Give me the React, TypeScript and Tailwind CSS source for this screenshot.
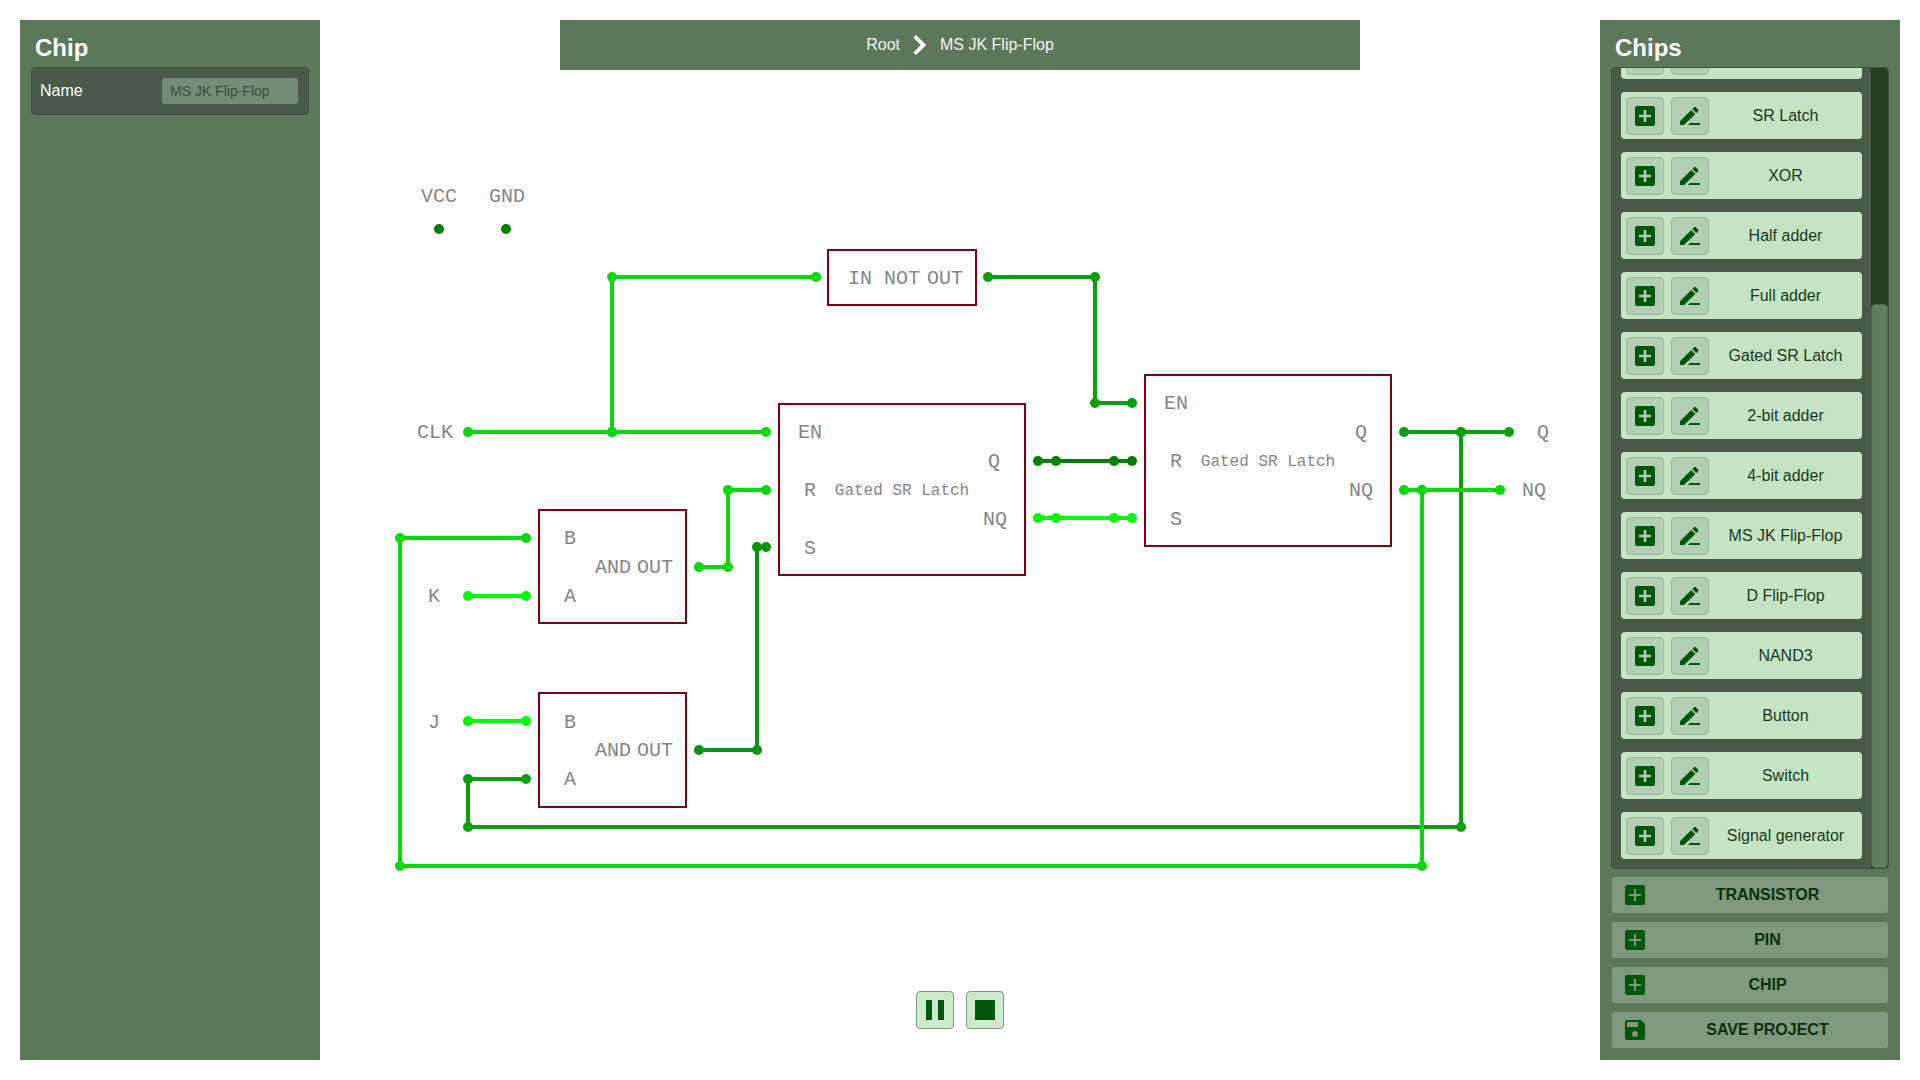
import { useLayoutEffect, useRef } from "react";

type Point = [number, number];

const BRIGHT = "#00fa06";
const HIGH = "#08d80c";
const MID = "#08a00c";
const LOW = "#008000";

const wires: { color: string; points: Point[] }[] = [
  { color: MID, points: [[1461, 432], [1461, 827], [468, 827], [468, 779], [526, 779]] },
  { color: MID, points: [[1404, 432], [1461, 432], [1509, 432]] },
  { color: HIGH, points: [[1404, 490], [1422, 490], [1500, 490]] },
  { color: HIGH, points: [[1422, 490], [1422, 866], [400, 866], [400, 538], [526, 538]] },
  { color: HIGH, points: [[468, 432], [612, 432], [766, 432]] },
  { color: HIGH, points: [[612, 432], [612, 277], [816, 277]] },
  { color: MID, points: [[988, 277], [1095, 277], [1095, 403], [1132, 403]] },
  { color: LOW, points: [[1038, 461], [1056, 461], [1114, 461], [1132, 461]] },
  { color: BRIGHT, points: [[1038, 518], [1056, 518], [1114, 518], [1132, 518]] },
  { color: HIGH, points: [[699, 567], [728, 567], [728, 490], [766, 490]] },
  { color: "#089410", points: [[699, 750], [757, 750], [757, 547], [766, 547]] },
  { color: BRIGHT, points: [[468, 596], [526, 596]] },
  { color: BRIGHT, points: [[468, 721], [526, 721]] },
  { color: LOW, points: [[439, 229]] },
  { color: LOW, points: [[506, 229]] },
];

const boxes = [
  { x: 828, y: 250, w: 148, h: 55 },
  { x: 779, y: 404, w: 246, h: 171 },
  { x: 1145, y: 375, w: 246, h: 171 },
  { x: 539, y: 510, w: 147, h: 113 },
  { x: 539, y: 693, w: 147, h: 114 },
];

const labels: [string, number, number][] = [
  ["VCC", 439, 196],
  ["GND", 507, 196],
  ["IN", 860, 278],
  ["NOT", 902, 278],
  ["OUT", 945, 278],
  ["CLK", 435, 432],
  ["K", 434, 596],
  ["J", 434, 722],
  ["EN", 810, 432],
  ["R", 810, 490],
  ["S", 810, 548],
  ["Q", 994, 461],
  ["NQ", 995, 519],
  ["EN", 1176, 403],
  ["R", 1176, 461],
  ["S", 1176, 519],
  ["Q", 1361, 432],
  ["NQ", 1361, 490],
  ["Q", 1543, 432],
  ["NQ", 1534, 490],
  ["B", 570, 538],
  ["AND", 613, 567],
  ["OUT", 655, 567],
  ["A", 570, 596],
  ["B", 570, 722],
  ["AND", 613, 750],
  ["OUT", 655, 750],
  ["A", 570, 779],
];

const names: [string, number, number][] = [
  ["Gated SR Latch", 902, 490],
  ["Gated SR Latch", 1268, 461],
];

const chips = [
  "",
  "SR Latch",
  "XOR",
  "Half adder",
  "Full adder",
  "Gated SR Latch",
  "2-bit adder",
  "4-bit adder",
  "MS JK Flip-Flop",
  "D Flip-Flop",
  "NAND3",
  "Button",
  "Switch",
  "Signal generator",
];

function AddIcon() {
  return (
    <svg viewBox="0 0 20 20" className="size-5 shrink-0 fill-[#00560a]" aria-hidden="true">
      <path
        fillRule="evenodd"
        d="M2 0h16a2 2 0 0 1 2 2v16a2 2 0 0 1-2 2H2a2 2 0 0 1-2-2V2a2 2 0 0 1 2-2zM9 4v5H4v2h5v5h2v-5h5V9h-5V4z"
      />
    </svg>
  );
}

function BoldAddIcon() {
  return (
    <svg viewBox="0 0 20 20" className="size-5 shrink-0 fill-[#00560a]" aria-hidden="true">
      <path
        fillRule="evenodd"
        d="M2 0h16a2 2 0 0 1 2 2v16a2 2 0 0 1-2 2H2a2 2 0 0 1-2-2V2a2 2 0 0 1 2-2zM8.7 4v4.7H4v2.6h4.7V16h2.6v-4.7H16V8.7h-4.7V4z"
      />
    </svg>
  );
}

function EditIcon() {
  return (
    <svg viewBox="0 0 20 20" className="size-5 shrink-0 fill-[#00560a]" aria-hidden="true">
      <path d="M0 15.2 11.3 4l4 4L4 19H0zM12.4 2.9l1.7-1.6a1.2 1.2 0 0 1 1.7 0l2.2 2.2a1.2 1.2 0 0 1 0 1.7l-1.6 1.7zM10 17h10v2H8z" />
    </svg>
  );
}

function SaveIcon() {
  return (
    <svg viewBox="0 0 20 20" className="size-5 shrink-0 fill-[#00560a]" aria-hidden="true">
      <path
        fillRule="evenodd"
        d="M2 0h14l4 4v14a2 2 0 0 1-2 2H2a2 2 0 0 1-2-2V2a2 2 0 0 1 2-2zM2 2v5h11V2zM10 11a3 3 0 1 0 0 6 3 3 0 0 0 0-6z"
      />
    </svg>
  );
}

function Schematic() {
  return (
    <svg viewBox="320 70 1280 900" className="block w-full" role="img" aria-label="Circuit schematic">
      {boxes.map((b, i) => (
        <rect key={i} x={b.x} y={b.y} width={b.w} height={b.h} fill="none" stroke="#800010" strokeWidth="2" />
      ))}
      {wires.map((w, i) => (
        <g key={i} fill={w.color}>
          <polyline points={w.points.map((p) => p.join(",")).join(" ")} fill="none" stroke={w.color} strokeWidth="4" />
          {w.points.map(([x, y]) => (
            <circle key={`${x}-${y}`} cx={x} cy={y} r="5" />
          ))}
        </g>
      ))}
      <g textAnchor="middle" className="fill-[#858585] font-['Liberation_Mono',monospace] text-[20px]">
        {labels.map(([text, x, y], i) => (
          <text key={i} x={x} y={y + 6}>
            {text}
          </text>
        ))}
      </g>
      <g textAnchor="middle" className="fill-[#858585] font-['Liberation_Mono',monospace] text-[16px]">
        {names.map(([text, x, y], i) => (
          <text key={i} x={x} y={y + 5}>
            {text}
          </text>
        ))}
      </g>
    </svg>
  );
}

function ChipRow({ name }: { name: string }) {
  const button =
    "flex size-[38px] items-center justify-center rounded border border-[#98bd9b] bg-[#b3cfb3]";
  return (
    <li className="flex h-[47px] shrink-0 items-center rounded bg-[#c4e4c4] pl-[5px]">
      <div className="flex gap-[7px]">
        <button type="button" aria-label={`Add ${name}`} className={button}>
          <BoldAddIcon />
        </button>
        <button type="button" aria-label={`Edit ${name}`} className={button}>
          <EditIcon />
        </button>
      </div>
      <span className="flex-1 text-center text-[#1c3a1e]">{name}</span>
    </li>
  );
}

function ChipList() {
  const list = useRef<HTMLUListElement>(null);
  useLayoutEffect(() => {
    if (list.current) list.current.scrollTop = list.current.scrollHeight;
  }, []);
  return (
    <div className="flex min-h-0 flex-1 overflow-hidden rounded border border-[#415441] bg-[#4a5a48]">
      <ul
        ref={list}
        className="flex flex-1 flex-col gap-[13px] overflow-y-auto px-[9px] py-[9px] [scrollbar-width:none]"
      >
        {chips.map((name) => (
          <ChipRow key={name} name={name} />
        ))}
      </ul>
      <div className="flex w-[17px] flex-col rounded-r bg-[#243e24]">
        <div className="h-[29.5%]" />
        <div className="flex-1 rounded border border-[#4a664b] bg-[#627e62]" />
      </div>
    </div>
  );
}

export default function App() {
  const actions = ["TRANSISTOR", "PIN", "CHIP", "SAVE PROJECT"];
  const control =
    "flex size-[38px] items-center justify-center rounded border border-[#7d9a7d] bg-[#cdeacd]";
  return (
    <div className="flex h-screen bg-white p-5 font-['Liberation_Sans',Arial,sans-serif] text-[16px] leading-5">
      <aside className="flex w-[300px] shrink-0 flex-col bg-[#5b7859] px-[11px] pt-[10px]">
        <h2 className="px-1 pb-px text-[24px] leading-9 font-bold text-white">Chip</h2>
        <div className="flex h-12 items-center justify-between rounded border border-[#415441] bg-[#4a5a48] pr-[10px] pl-2">
          <label htmlFor="chip-name" className="text-white">
            Name
          </label>
          <input
            id="chip-name"
            type="text"
            defaultValue="MS JK Flip-Flop"
            className="h-[26px] w-[136px] rounded-[3px] bg-[#748b74] px-2 text-[14px] text-[#37523a]"
          />
        </div>
      </aside>

      <main className="flex min-w-0 flex-1 flex-col items-center">
        <nav
          aria-label="Breadcrumb"
          className="flex h-[50px] w-[62.5%] shrink-0 items-center justify-center gap-[13px] bg-[#5b7859] text-[#f2f7f2]"
        >
          <a href="#root">Root</a>
          <svg viewBox="0 0 14 20" className="h-5 w-[14px] fill-white" aria-hidden="true">
            <path d="M0.5 2.4 2.9 0 13.3 10 2.9 20 0.5 17.6 7.6 10z" />
          </svg>
          <a href="#ms-jk-flip-flop">MS JK Flip-Flop</a>
        </nav>
        <Schematic />
        <div className="mt-[21px] flex gap-3">
          <button type="button" aria-label="Pause" className={control}>
            <svg viewBox="0 0 20 20" className="size-5 fill-[#00560a]" aria-hidden="true">
              <path d="M1 0h6v20H1zM13 0h6v20h-6z" />
            </svg>
          </button>
          <button type="button" aria-label="Stop" className={control}>
            <svg viewBox="0 0 20 20" className="size-5 fill-[#00560a]" aria-hidden="true">
              <path d="M0 0h20v20H0z" />
            </svg>
          </button>
        </div>
      </main>

      <aside className="flex w-[300px] shrink-0 flex-col bg-[#5b7859] px-[11px] pt-[10px] pb-3">
        <h2 className="px-1 pb-px text-[24px] leading-9 font-bold text-white">Chips</h2>
        <ChipList />
        <div className="mt-2 flex flex-col gap-[9px] px-px">
          {actions.map((action) => (
            <button
              key={action}
              type="button"
              className="flex h-9 items-center rounded-[3px] bg-[#7e997e] pl-[13px] font-bold text-[#0c300e]"
            >
              {action === "SAVE PROJECT" ? <SaveIcon /> : <AddIcon />}
              <span className="flex-1 pl-0.5 text-center">{action}</span>
            </button>
          ))}
        </div>
      </aside>
    </div>
  );
}
